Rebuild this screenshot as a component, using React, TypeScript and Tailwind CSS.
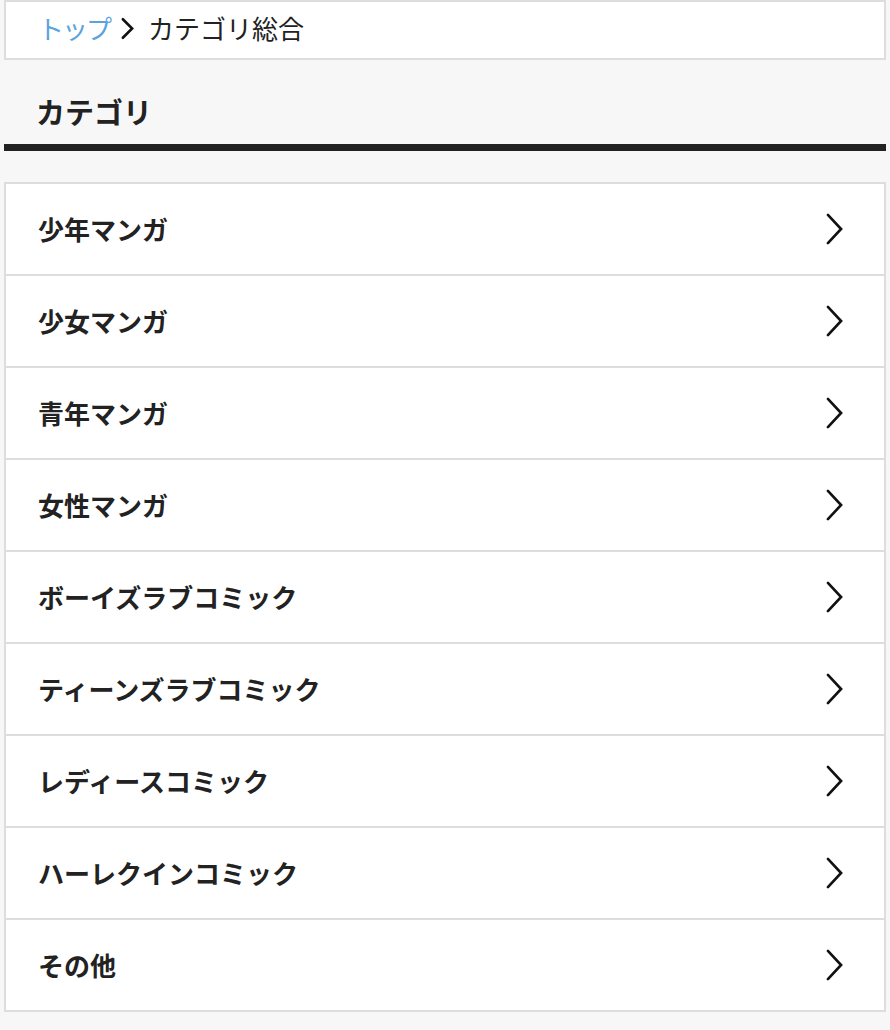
import React from 'react';

const categories = [
  '少年マンガ',
  '少女マンガ',
  '青年マンガ',
  '女性マンガ',
  'ボーイズラブコミック',
  'ティーンズラブコミック',
  'レディースコミック',
  'ハーレクインコミック',
  'その他',
];

function Chevron({ className }: { className?: string }) {
  return (
    <svg viewBox="0 0 20 34" className={className} fill="none">
      <polyline
        points="3,2 17,17 3,32"
        stroke="#111"
        strokeWidth="2.8"
        strokeLinecap="round"
        strokeLinejoin="miter"
      />
    </svg>
  );
}

export default function App() {
  return (
    <div
      className="min-h-[1030px] bg-[#f7f7f7] px-1 pb-5"
      style={{ fontFamily: '"Noto Sans CJK JP", "Noto Sans", sans-serif' }}
    >
      {/* Breadcrumb */}
      <nav className="flex h-[60px] items-center border-2 border-[#dddddd] bg-white pb-1 pl-8">
        <span className="text-[26px] leading-none tracking-[-2px] text-[#5ba3e0]">トップ</span>
        <svg viewBox="0 0 14 24" className="ml-[11px] mr-[14px] h-[23px] w-[13px]" fill="none">
          <polyline points="2,2 12,12 2,22" stroke="#111" strokeWidth="2.8" strokeLinecap="round" />
        </svg>
        <span className="text-[26px] leading-none text-[#222]">カテゴリ総合</span>
      </nav>

      {/* Heading */}
      <div className="flex h-[84px] items-center pl-8 pt-[18px]">
        <h2 className="text-[29px] font-bold leading-none text-[#222]">カテゴリ</h2>
      </div>
      <div className="h-[7px] bg-[#222]" />

      {/* Category list */}
      <ul className="mt-[31px] border-2 border-[#dddddd] bg-white">
        {categories.map((name, i) => (
          <li
            key={i}
            className={
              'flex h-[90px] items-center justify-between pl-8 pr-[40px] ' +
              (i > 0 ? 'h-[92px] border-t-2 border-[#dddddd]' : '')
            }
          >
            <span className="text-[26px] font-bold leading-none text-[#222]">{name}</span>
            <Chevron className="h-[32px] w-[19px]" />
          </li>
        ))}
      </ul>
    </div>
  );
}
